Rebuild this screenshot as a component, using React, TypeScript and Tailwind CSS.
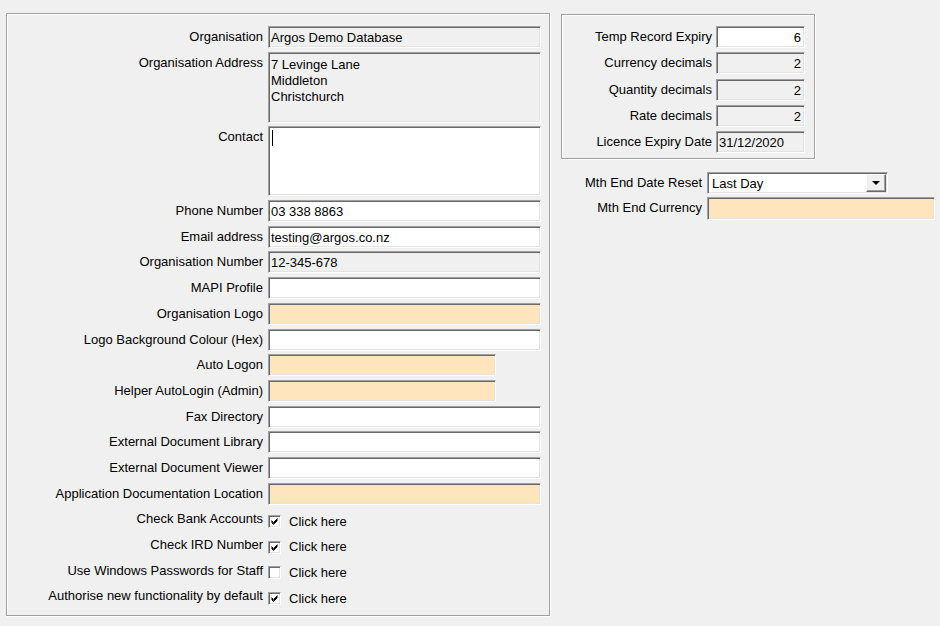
import type { ReactNode } from "react";

const sunken =
  "border border-t-[#a0a0a0] border-l-[#a0a0a0] border-r-white border-b-white shadow-[inset_1px_1px_0_#696969,inset_-1px_-1px_0_#e3e3e3]";
const etched = "border border-[#a0a0a0] shadow-[inset_1px_1px_0_#ffffff,1px_1px_0_#ffffff]";

type Tone = "white" | "grey" | "peach";
const toneBg: Record<Tone, string> = {
  white: "bg-white",
  grey: "bg-[#f0f0f0]",
  peach: "bg-[#fee5bd]",
};

function Field({ w, h = 22, tone = "white", align = "left", children }: {
  w: number; h?: number; tone?: Tone; align?: "left" | "right"; children?: ReactNode;
}) {
  return (
    <div
      className={`${sunken} ${toneBg[tone]} shrink-0 pl-[2px] pr-[3px] pt-[3px] leading-[16px] whitespace-pre-line overflow-hidden ${align === "right" ? "text-right" : "text-left"}`}
      style={{ width: w, height: h }}
    >
      {children}
    </div>
  );
}

function Row({ label, labelW, children }: { label: string; labelW: number; children: ReactNode }) {
  return (
    <div className="flex items-start">
      <div className="shrink-0 text-right pt-[3px] leading-[16px] whitespace-nowrap" style={{ width: labelW }}>
        {label}
      </div>
      <div className="ml-[5px] flex items-start">{children}</div>
    </div>
  );
}

function Check({ on }: { on: boolean }) {
  return (
    <div className="flex items-center h-[22px] pt-[4px]">
      <div className={`${sunken} bg-white w-[13px] h-[13px] flex items-center justify-center`}>
        {on && (
          <svg width="9" height="9" viewBox="0 0 9 9">
            <path d="M1.5 3.5 L3.5 5.5 L7.5 1.5 M1.5 4.5 L3.5 6.5 L7.5 2.5 M1.5 5.5 L3.5 7.5 L7.5 3.5" stroke="#000" strokeWidth="1" fill="none" />
          </svg>
        )}
      </div>
      <span className="ml-[8px]">Click here</span>
    </div>
  );
}

const LW = 256;

export default function App() {
  return (
    <div
      className="w-[940px] h-[626px] bg-[#f0f0f0] text-black text-[13px] flex items-start overflow-hidden"
      style={{ fontFamily: '"Liberation Sans", Arial, sans-serif' }}
    >
      {/* left group */}
      <div className={`${etched} ml-[6px] mt-[13px] w-[544px] h-[603px] pt-[12px] flex flex-col gap-[3.7px]`}>
        <Row label="Organisation" labelW={LW}><Field w={273} tone="grey">Argos Demo Database</Field></Row>
        <Row label="Organisation Address" labelW={LW}>
          <Field w={273} h={71} tone="grey">
            <div className="pt-px">{"7 Levinge Lane\nMiddleton\nChristchurch"}</div>
          </Field>
        </Row>
        <Row label="Contact" labelW={LW}>
          <Field w={273} h={70}>
            <div className="ml-px w-px h-[16px] bg-black" />
          </Field>
        </Row>
        <Row label="Phone Number" labelW={LW}><Field w={273}>03 338 8863</Field></Row>
        <Row label="Email address" labelW={LW}><Field w={273}>testing@argos.co.nz</Field></Row>
        <Row label="Organisation Number" labelW={LW}><Field w={273} tone="grey">12-345-678</Field></Row>
        <Row label="MAPI Profile" labelW={LW}><Field w={273} /></Row>
        <Row label="Organisation Logo" labelW={LW}><Field w={273} tone="peach" /></Row>
        <Row label="Logo Background Colour (Hex)" labelW={LW}><Field w={273} /></Row>
        <Row label="Auto Logon" labelW={LW}><Field w={228} tone="peach" /></Row>
        <Row label="Helper AutoLogin (Admin)" labelW={LW}><Field w={228} tone="peach" /></Row>
        <Row label="Fax Directory" labelW={LW}><Field w={273} /></Row>
        <Row label="External Document Library" labelW={LW}><Field w={273} /></Row>
        <Row label="External Document Viewer" labelW={LW}><Field w={273} /></Row>
        <Row label="Application Documentation Location" labelW={LW}><Field w={273} tone="peach" /></Row>
        <Row label="Check Bank Accounts" labelW={LW}><Check on /></Row>
        <Row label="Check IRD Number" labelW={LW}><Check on /></Row>
        <Row label="Use Windows Passwords for Staff" labelW={LW}><Check on={false} /></Row>
        <Row label="Authorise new functionality by default" labelW={LW}><Check on /></Row>
      </div>

      {/* right column */}
      <div className="ml-[11px] mt-[14px] flex flex-col">
        <div className={`${etched} w-[254px] h-[145px] pt-[11px] flex flex-col gap-[4.25px]`}>
          <div className="flex items-start">
            <div className="w-[150px] text-right pt-[3px] leading-[16px] whitespace-nowrap">Temp Record Expiry</div>
            <div className="ml-[4px]"><Field w={89} align="right">6</Field></div>
          </div>
          <div className="flex items-start">
            <div className="w-[150px] text-right pt-[3px] leading-[16px] whitespace-nowrap">Currency decimals</div>
            <div className="ml-[4px]"><Field w={89} tone="grey" align="right">2</Field></div>
          </div>
          <div className="flex items-start">
            <div className="w-[150px] text-right pt-[3px] leading-[16px] whitespace-nowrap">Quantity decimals</div>
            <div className="ml-[4px]"><Field w={89} tone="grey" align="right">2</Field></div>
          </div>
          <div className="flex items-start">
            <div className="w-[150px] text-right pt-[3px] leading-[16px] whitespace-nowrap">Rate decimals</div>
            <div className="ml-[4px]"><Field w={89} tone="grey" align="right">2</Field></div>
          </div>
          <div className="flex items-start">
            <div className="w-[150px] text-right pt-[3px] leading-[16px] whitespace-nowrap">Licence Expiry Date</div>
            <div className="ml-[4px]"><Field w={89} tone="grey">31/12/2020</Field></div>
          </div>
        </div>

        <div className="mt-[13px] flex flex-col gap-[3px]">
          <div className="flex items-start">
            <div className="w-[141px] text-right pt-[3px] leading-[16px] whitespace-nowrap">Mth End Date Reset</div>
            <div className={`${sunken} bg-white ml-[5px] w-[181px] h-[22px] flex items-stretch p-[1px]`}>
              <div className="flex-1 pl-[3px] pt-[2px] leading-[16px]">Last Day</div>
              <div className="w-[20px] bg-[#f0f0f0] border border-t-white border-l-white border-r-[#696969] border-b-[#696969] shadow-[inset_-1px_-1px_0_#a0a0a0] flex items-center justify-center">
                <svg width="8" height="4" viewBox="0 0 8 4">
                  <path d="M0 0 H8 L4 4 Z" fill="#000" />
                </svg>
              </div>
            </div>
          </div>
          <div className="flex items-start">
            <div className="w-[141px] text-right pt-[3px] leading-[16px] whitespace-nowrap">Mth End Currency</div>
            <div className="ml-[5px]"><Field w={228} h={23} tone="peach" /></div>
          </div>
        </div>
      </div>
    </div>
  );
}
